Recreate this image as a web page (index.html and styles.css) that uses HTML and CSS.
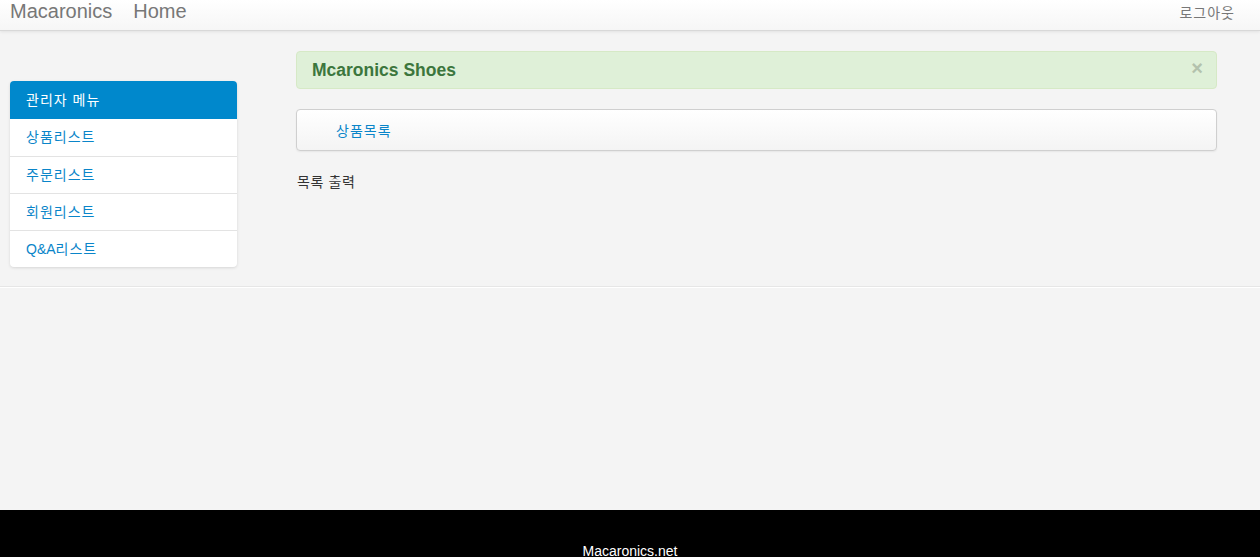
FILE: index.html
```html
<!DOCTYPE html>
<html lang="ko">
<head>
    <meta charset="UTF-8">
    <title>Macaronics 관리자</title>
    <link rel="stylesheet" href="styles.css">
</head>
<body>
    <nav class="navbar">
        <div class="nav-left">
            <a class="brand" href="#">Macaronics</a>
            <a class="nav-link" href="#">Home</a>
        </div>
        <a class="logout" href="#">로그아웃</a>
    </nav>

    <div class="page">
        <div class="row">
            <aside class="sidebar">
                <div class="list-group">
                    <div class="list-head">관리자 메뉴</div>
                    <a class="list-item" href="#">상품리스트</a>
                    <a class="list-item" href="#">주문리스트</a>
                    <a class="list-item" href="#">회원리스트</a>
                    <a class="list-item" href="#"><span class="latin">Q&amp;A</span>리스트</a>
                </div>
            </aside>

            <main class="main">
                <div class="alert">
                    <span class="alert-title">Mcaronics Shoes</span>
                    <span class="close">&times;</span>
                </div>
                <div class="crumb">
                    <a href="#">상품목록</a>
                </div>
                <p class="output">목록 출력</p>
            </main>
        </div>
        <hr class="divider">
    </div>

    <footer class="footer">
        <p>Macaronics.net</p>
    </footer>
</body>
</html>
```

FILE: styles.css
```css
* {
    margin: 0;
    padding: 0;
    box-sizing: border-box;
}

body {
    background: #f4f4f4;
    font-family: "Liberation Sans", "Noto Sans CJK KR", sans-serif;
    font-size: 14px;
    color: #333;
}

a {
    text-decoration: none;
}

.navbar {
    height: 31px;
    display: flex;
    justify-content: space-between;
    align-items: center;
    background: linear-gradient(to bottom, #ffffff 0%, #f6f6f6 100%);
    border-bottom: 1px solid #d8d8d8;
    box-shadow: 0 1px 3px rgba(0, 0, 0, 0.08);
    padding: 0 25px 0 10px;
}

.nav-left {
    display: flex;
    align-items: center;
    gap: 21px;
}

.brand,
.nav-link {
    font-size: 20px;
    color: #777;
    line-height: 22px;
    margin-top: -8px;
}

.logout {
    font-size: 14px;
    letter-spacing: 1px;
    color: #777;
    margin-top: -7px;
}

.page {
    min-height: 479px;
}

.row {
    display: flex;
    align-items: flex-start;
    padding: 20px 43px 0 10px;
    gap: 59px;
}

.sidebar {
    width: 227px;
    flex-shrink: 0;
    margin-top: 30px;
}

.list-group {
    background: #fff;
    border-radius: 4px;
    box-shadow: 0 1px 3px rgba(0, 0, 0, 0.12);
    overflow: hidden;
    letter-spacing: 1px;
}

.list-head {
    height: 38px;
    line-height: 38px;
    padding-left: 16px;
    background: #0088cc;
    color: #fff;
}

.list-item {
    display: block;
    height: 37px;
    line-height: 36px;
    padding-left: 16px;
    color: #0a85c9;
    border-top: 1px solid #e3e3e3;
}

.list-item:first-of-type {
    border-top: none;
}

.latin {
    letter-spacing: 0;
}

.main {
    flex: 1;
}

.alert {
    height: 38px;
    display: flex;
    justify-content: space-between;
    align-items: center;
    padding: 0 13px 0 15px;
    background: #dff0d8;
    border: 1px solid #d6e9c6;
    border-radius: 4px;
}

.alert-title {
    font-size: 17.5px;
    font-weight: bold;
    color: #3c763d;
}

.close {
    font-size: 20px;
    font-weight: bold;
    color: #b3c2ad;
    margin-top: -4px;
}

.crumb {
    margin-top: 20px;
    height: 42px;
    display: flex;
    align-items: center;
    padding-left: 39px;
    background: linear-gradient(to bottom, #ffffff 0%, #f4f4f4 100%);
    border: 1px solid #cfcfcf;
    border-radius: 4px;
    box-shadow: 0 1px 2px rgba(0, 0, 0, 0.06);
}

.crumb a {
    color: #0a85c9;
    letter-spacing: 1px;
}

.output {
    margin-top: 20px;
    margin-left: 1px;
    color: #333;
    letter-spacing: 0.6px;
}

.divider {
    margin-top: 19px;
    border: 0;
    border-top: 1px solid #e6e6e6;
    border-bottom: 1px solid #fff;
}

.footer {
    height: 47px;
    background: #000;
    color: #fff;
    text-align: center;
    padding-top: 33px;
    overflow: hidden;
}
```
